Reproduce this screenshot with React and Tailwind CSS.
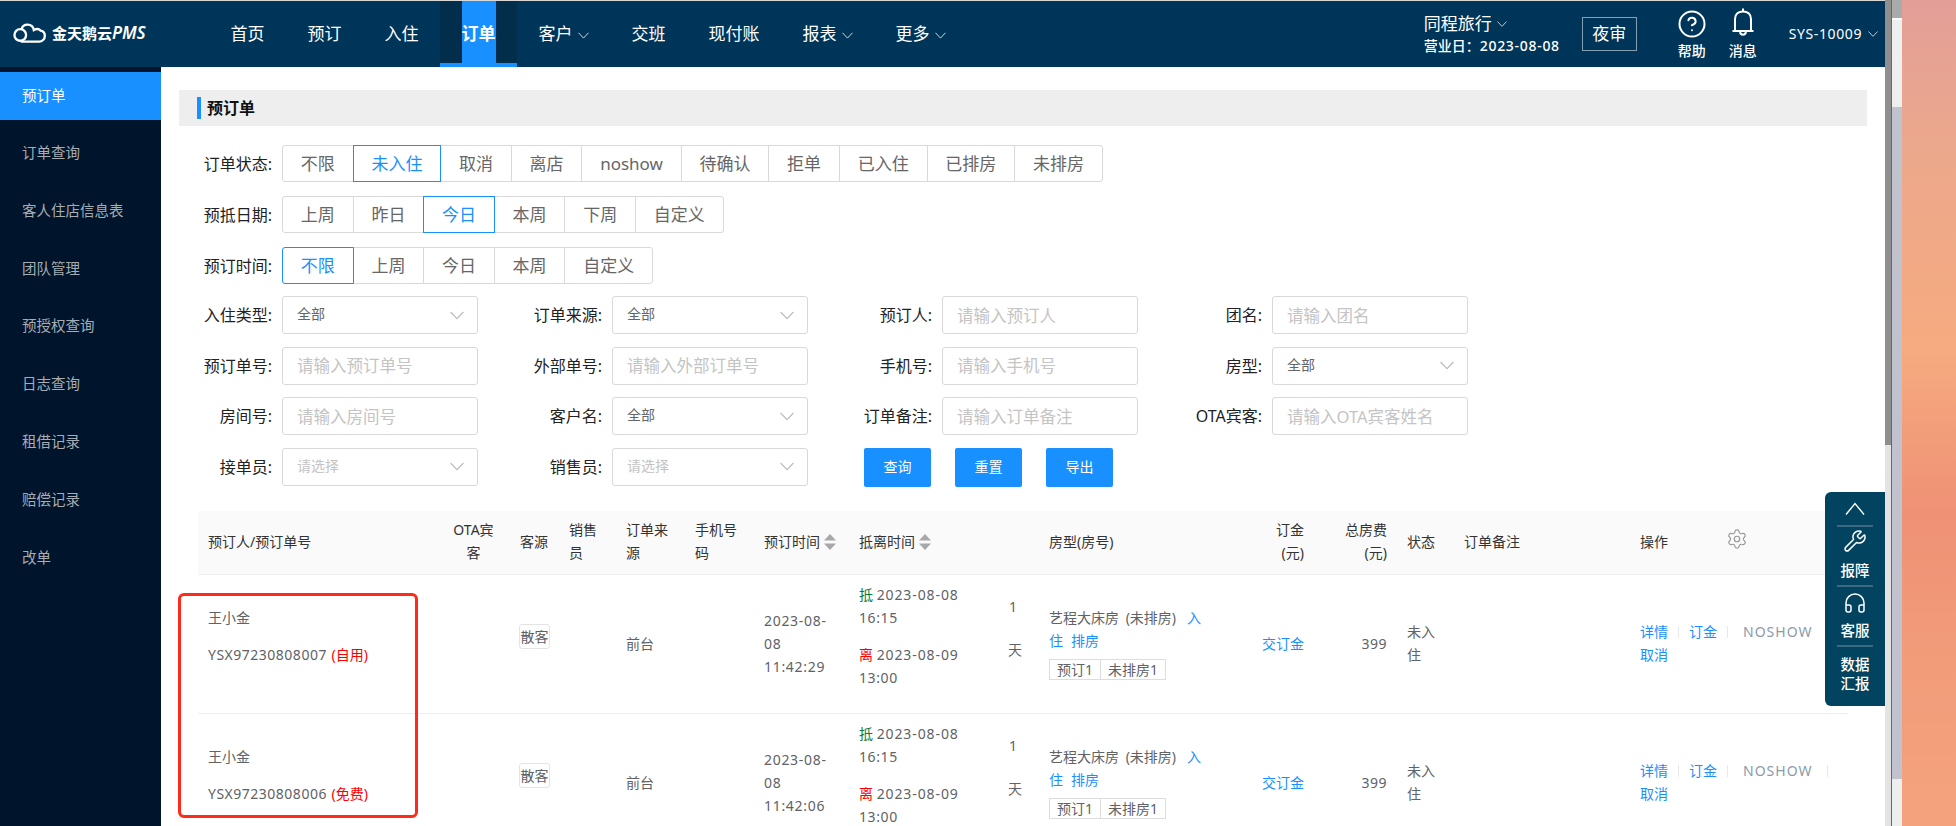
import React from 'react';
import { CircleHelp, Headphones, Settings, Wrench } from 'lucide-react';

const navItems = [
  { label: '首页' },
  { label: '预订' },
  { label: '入住' },
  { label: '订单', active: true },
  { label: '客户', arrow: true },
  { label: '交班' },
  { label: '现付账' },
  { label: '报表', arrow: true },
  { label: '更多', arrow: true },
];

const sideItems = ['订单查询', '客人住店信息表', '团队管理', '预授权查询', '日志查询', '租借记录', '赔偿记录', '改单'];

const statusOptions = ['不限', '未入住', '取消', '离店', 'noshow', '待确认', '拒单', '已入住', '已排房', '未排房'];
const arriveOptions = ['上周', '昨日', '今日', '本周', '下周', '自定义'];
const bookOptions = ['不限', '上周', '今日', '本周', '自定义'];

const orders = [
  { no: 'YSX97230808007', tag: '(自用)', time: '2023-08-08 11:42:29' },
  { no: 'YSX97230808006', tag: '(免费)', time: '2023-08-08 11:42:06' },
];

const Chevron = ({ className }) => (
  <svg viewBox="0 0 12 7" fill="none" stroke="currentColor" strokeWidth="1" className={className}>
    <path d="M0.5 0.5 L6 6.3 L11.5 0.5" />
  </svg>
);

const SortIcon = () => (
  <svg viewBox="0 0 12 16" className="inline-block w-[12px] h-[16px] ml-[4px] align-[-3px] fill-[#a8a8a8]">
    <path d="M6 0 L12 6.5 H0 Z" />
    <path d="M6 16 L0 9.5 H12 Z" />
  </svg>
);

const Segmented = ({ label, options, selected }) => (
  <div className="flex items-center h-[37px] gap-[10px]">
    <div className="w-[93px] text-right text-base text-[#222]">{label}</div>
    <div className="flex pl-px">
      {options.map((opt, i) => (
        <div
          key={opt}
          className={`relative -ml-px h-[37px] px-[17.8px] flex items-center border text-[17px] ${
            opt === selected ? 'z-10 border-[#1890ff] text-[#1890ff]' : 'border-[#d9d9d9] text-[#666]'
          } ${i === 0 ? 'rounded-l-[3px]' : ''} ${i === options.length - 1 ? 'rounded-r-[3px]' : ''}`}
        >
          {opt}
        </div>
      ))}
    </div>
  </div>
);

const FieldLabel = ({ children }) => (
  <div className="flex items-center justify-end text-base text-[#222]">{children}</div>
);

const SelectBox = ({ value, placeholder }) => (
  <div className="h-[38px] flex items-center justify-between pl-[14px] pr-[13px] border border-[#d9d9d9] rounded-[3px]">
    <span className={`text-sm -mt-[2px] ${placeholder ? 'text-[#c4c4c4]' : 'text-[#666]'}`}>{value}</span>
    <Chevron className="w-[14px] h-[9px] text-[#bbb]" />
  </div>
);

const TextBox = ({ placeholder }) => (
  <input
    type="text"
    placeholder={placeholder}
    className="w-full h-[38px] pl-[14px] pr-[4px] border border-[#d9d9d9] rounded-[3px] text-[16.5px] placeholder:text-[#c4c4c4] outline-none"
  />
);

const ActionSep = ({ className }) => <span className={`w-px h-[12px] bg-[#e8e8e8] ${className}`} />;

const OrderRow = ({ order }) => (
  <tr className="h-[139px] border-b border-[#eee] text-sm leading-[23px] text-[#606266] [&>td]:pb-[2px]">
    <td className="px-[10px] align-middle">
      <p className="mb-[14px]">王小金</p>
      <p className="mb-[14px]">
        <span className="tracking-[0.5px]">{order.no}</span> <span className="ml-[1px] text-[#f00]">{order.tag}</span>
      </p>
    </td>
    <td />
    <td className="px-[10px]">
      <p className="mb-[14px]">
        <span className="block w-[31px] -mx-px text-center border border-[#e4e4e4] rounded-[3px]">散客</span>
      </p>
    </td>
    <td />
    <td className="px-[10px]">前台</td>
    <td />
    <td className="px-[10px] tracking-[0.7px]">{order.time}</td>
    <td className="px-[10px]">
      <p className="mb-[14px]">
        <span className="text-[#0a7a3b]">抵</span> <span className="tracking-[0.9px]">2023-08-08</span>
        <br />
        <span className="tracking-[0.6px]">16:15</span>
      </p>
      <p className="mb-[14px]">
        <span className="text-[#f00]">离</span> <span className="tracking-[0.9px]">2023-08-09</span>
        <br />
        <span className="tracking-[0.6px]">13:00</span>
      </p>
    </td>
    <td className="pl-[9px]">
      <div className="mb-[30px]">
        <div className="mb-[20px] pl-px">1</div>
        <div>天</div>
      </div>
    </td>
    <td className="px-[10px]">
      <div className="whitespace-nowrap">
        艺程大床房 <span className="ml-[3px]">(未排房)</span>
        <a className="ml-[11px] text-[#1890ff]">入</a>
        <br />
        <a className="text-[#1890ff]">住</a>
        <a className="ml-[8px] text-[#1890ff]">排房</a>
      </div>
      <div className="flex mt-[7px] text-sm leading-[19px]">
        <span className="px-[7px] border border-[#ddd]">预订1</span>
        <span className="px-[7px] border border-[#ddd] -ml-px">未排房1</span>
      </div>
    </td>
    <td className="px-[10px] text-right text-[#1890ff]">交订金</td>
    <td className="px-[10px] text-right tracking-[0.5px]">399</td>
    <td className="px-[10px]">未入住</td>
    <td />
    <td className="px-[10px]">
      <div className="flex flex-wrap items-center text-[#1890ff]">
        <span>详情</span>
        <ActionSep className="mx-[10px]" />
        <span>订金</span>
        <ActionSep className="ml-[10px] mr-[15px]" />
        <span className="text-[#8c9bab] tracking-[1px]">NOSHOW</span>
        <ActionSep className="ml-[15px]" />
        <span>取消</span>
      </div>
    </td>
  </tr>
);

const App = () => {
  return (
    <div className="relative flex w-[1956px] h-[826px] overflow-hidden bg-white font-['Noto_Sans','Noto_Sans_CJK_SC',sans-serif]">
      <div className="relative w-[1885px] shrink-0 flex flex-col">
        <div className="h-px bg-[#d8d8d8]" />

        {/* Top bar */}
        <header className="flex h-[66px] bg-[#00355a] text-white shrink-0">
          <div className="w-[209px] flex items-center pl-[13px] gap-[6px]">
            <svg viewBox="0 0 34 20" fill="none" stroke="white" strokeWidth="2.4" className="w-[33px] h-[20px] -mt-[3px]">
              <circle cx="7.5" cy="12" r="6" />
              <path d="M9 6 C9.5 3 12 1.3 15 1.3 C18.5 1.3 21 3.8 21.5 7 C24 5.5 27 6 28.5 7.5 C31.5 8 32.8 10.5 32.8 13 C32.8 16.5 30 18.8 27 18.8 H8" />
            </svg>
            <span className="text-[15px] font-bold leading-none -mt-[3px]">
              金天鹅云<span className="italic font-semibold text-[17px]">PMS</span>
            </span>
          </div>
          <nav className="flex">
            {navItems.map((item) =>
              item.active ? (
                <div key={item.label} className="h-full px-[21.5px] bg-[#022e4c] border-b-[4px] border-[#1890ff]">
                  <div className="h-[62px] pt-[4px] flex items-center bg-[#1890ff] font-bold text-[17px]">{item.label}</div>
                </div>
              ) : (
                <div key={item.label} className="h-full px-[21.5px] flex items-center gap-[5px] text-[17px]">
                  {item.label}
                  {item.arrow && <Chevron className="w-[11px] h-[7px] text-[#dfe6ec] mt-[2px]" />}
                </div>
              )
            )}
          </nav>
          <div className="ml-auto flex items-center pr-[7px]">
            <div className="w-[158px] flex flex-col -mt-[1px]">
              <div className="flex items-center gap-[5px] text-[17px] leading-[24px]">
                同程旅行
                <Chevron className="w-[10px] h-[6px] text-[#dfe6ec]" />
              </div>
              <div className="text-sm font-medium leading-[20px]">
                营业日：<span className="tracking-[0.7px]">2023-08-08</span>
              </div>
            </div>
            <div className="w-[55px] h-[34px] flex items-center justify-center border border-[#84a0b3] text-[17px]">夜审</div>
            <div className="ml-[37px] w-[36px] self-start pt-[8px] flex flex-col items-center">
              <CircleHelp size={30} strokeWidth={1.6} />
              <span className="mt-[3px] text-sm font-medium leading-[18px]">帮助</span>
            </div>
            <div className="ml-[15px] w-[36px] self-start pt-[7px] flex flex-col items-center">
              <svg viewBox="0 0 22 28" fill="none" stroke="white" strokeWidth="2" className="w-[22px] h-[28px]">
                <path d="M11 0.5 V3.5" />
                <path d="M3 22.5 V11 C3 6 6.5 3.5 11 3.5 C15.5 3.5 19 6 19 11 V22.5" />
                <path d="M0.5 23 H21.5" />
                <path d="M8 24 C8.5 27.5 13.5 27.5 14 24" />
              </svg>
              <span className="mt-[6px] text-sm font-medium leading-[18px]">消息</span>
            </div>
            <div className="ml-[28px] flex items-center gap-[6px] text-sm tracking-[0.6px]">
              SYS-10009
              <Chevron className="w-[10px] h-[6px] text-[#dfe6ec]" />
            </div>
          </div>
        </header>

        <div className="flex flex-1 min-h-0">
          {/* Side menu */}
          <aside className="w-[161px] shrink-0 bg-[#00142b] pt-[5px] text-[14.5px] text-[#a6adb4]">
            <div className="h-[48px] mb-[4px] flex items-center pl-[22px] bg-[#1890ff] text-white">预订单</div>
            {sideItems.map((item) => (
              <div key={item} className="h-[57.8px] flex items-center pl-[22px]">
                {item}
              </div>
            ))}
          </aside>

          {/* Main content */}
          <main className="flex-1 min-w-0 px-[18px] pt-[23px] overflow-hidden">
            <div className="h-[36px] flex items-center pl-[18px] bg-[#eee]">
              <span className="w-[4px] h-[22px] bg-[#1890ff] mr-[6px]" />
              <h2 className="text-base font-bold text-[#111]">预订单</h2>
            </div>

            <div className="mt-[19px] flex flex-col gap-[14px]">
              <Segmented label="订单状态:" options={statusOptions} selected="未入住" />
              <Segmented label="预抵日期:" options={arriveOptions} selected="今日" />
              <Segmented label="预订时间:" options={bookOptions} selected="不限" />
            </div>

            <div className="mt-[12px] grid grid-cols-[93px_196px_114px_196px_114px_196px_114px_196px] gap-x-[10px] gap-y-[12.5px]">
              <FieldLabel>入住类型:</FieldLabel>
              <SelectBox value="全部" />
              <FieldLabel>订单来源:</FieldLabel>
              <SelectBox value="全部" />
              <FieldLabel>预订人:</FieldLabel>
              <TextBox placeholder="请输入预订人" />
              <FieldLabel>团名:</FieldLabel>
              <TextBox placeholder="请输入团名" />

              <FieldLabel>预订单号:</FieldLabel>
              <TextBox placeholder="请输入预订单号" />
              <FieldLabel>外部单号:</FieldLabel>
              <TextBox placeholder="请输入外部订单号" />
              <FieldLabel>手机号:</FieldLabel>
              <TextBox placeholder="请输入手机号" />
              <FieldLabel>房型:</FieldLabel>
              <SelectBox value="全部" />

              <FieldLabel>房间号:</FieldLabel>
              <TextBox placeholder="请输入房间号" />
              <FieldLabel>客户名:</FieldLabel>
              <SelectBox value="全部" />
              <FieldLabel>订单备注:</FieldLabel>
              <TextBox placeholder="请输入订单备注" />
              <FieldLabel>OTA宾客:</FieldLabel>
              <TextBox placeholder="请输入OTA宾客姓名" />

              <FieldLabel>接单员:</FieldLabel>
              <SelectBox value="请选择" placeholder />
              <FieldLabel>销售员:</FieldLabel>
              <SelectBox value="请选择" placeholder />
              <div className="col-span-4 flex gap-[24px] pl-[46px]">
                {['查询', '重置', '导出'].map((b) => (
                  <button key={b} className="w-[67px] h-[39px] bg-[#1890ff] text-white text-sm rounded-[2px]">
                    {b}
                  </button>
                ))}
              </div>
            </div>

            {/* Order table */}
            <div className="relative mt-[24px] ml-[19px] w-[1650px]">
              <table className="table-fixed w-[1650px] border-collapse">
                <colgroup>
                  <col className="w-[239px]" />
                  <col className="w-[73px]" />
                  <col className="w-[49px]" />
                  <col className="w-[57px]" />
                  <col className="w-[69px]" />
                  <col className="w-[69px]" />
                  <col className="w-[95px]" />
                  <col className="w-[150px]" />
                  <col className="w-[40px]" />
                  <col className="w-[181px]" />
                  <col className="w-[94px]" />
                  <col className="w-[83px]" />
                  <col className="w-[57px]" />
                  <col className="w-[176px]" />
                  <col className="w-[218px]" />
                </colgroup>
                <thead>
                  <tr className="h-[64px] bg-[#fafafa] border-b border-[#eee] text-sm leading-[23px] text-[#333] text-left font-normal [&>th]:pb-[2px]">
                    <th className="px-[10px] font-normal">预订人/预订单号</th>
                    <th className="px-[10px] font-normal text-center">OTA宾客</th>
                    <th className="px-[10px] font-normal">客源</th>
                    <th className="px-[10px] font-normal">销售员</th>
                    <th className="px-[10px] font-normal">订单来源</th>
                    <th className="px-[10px] font-normal">手机号码</th>
                    <th className="px-[10px] font-normal whitespace-nowrap">
                      预订时间
                      <SortIcon />
                    </th>
                    <th className="px-[10px] font-normal whitespace-nowrap">
                      抵离时间
                      <SortIcon />
                    </th>
                    <th />
                    <th className="px-[10px] font-normal">房型(房号)</th>
                    <th className="px-[10px] font-normal text-right">
                      订金
                      <br />
                      (元)
                    </th>
                    <th className="px-[10px] font-normal text-right">
                      总房费
                      <br />
                      (元)
                    </th>
                    <th className="px-[10px] font-normal">状态</th>
                    <th className="px-[10px] font-normal">订单备注</th>
                    <th className="px-[10px] font-normal">
                      <div className="flex items-center">
                        操作
                        <Settings size={22} strokeWidth={1.3} className="ml-[58px] -mt-[4px] text-[#999]" />
                      </div>
                    </th>
                  </tr>
                </thead>
                <tbody>
                  {orders.map((order) => (
                    <OrderRow key={order.no} order={order} />
                  ))}
                </tbody>
              </table>
              {/* red annotation box drawn over the screenshot */}
              <div className="absolute left-[-20px] top-[82px] w-[240px] h-[225px] border-[3px] border-[#ff2a1a] rounded-[6px] pointer-events-none" />
            </div>
          </main>
        </div>

        {/* Floating tool strip */}
        <div className="absolute right-0 top-[492px] w-[60px] h-[214px] bg-[#02435f] rounded-l-[6px] flex flex-col items-center text-[14.5px] font-medium text-white">
          <div className="h-[33px] flex items-center justify-center">
            <svg viewBox="0 0 20 13" fill="none" stroke="white" strokeWidth="1.4" className="w-[20px] h-[13px]">
              <path d="M1 12.5 L10 1.5 L19 12.5" />
            </svg>
          </div>
          <div className="w-[36px] h-[2px] bg-[#3d6a82]" />
          <div className="h-[58px] flex flex-col items-center pt-[2px]">
            <Wrench size={24} strokeWidth={1.5} />
            <span className="mt-[7px] leading-[20px]">报障</span>
          </div>
          <div className="w-[36px] h-[2px] bg-[#3d6a82]" />
          <div className="h-[58px] flex flex-col items-center pt-[4px]">
            <Headphones size={24} strokeWidth={1.5} />
            <span className="mt-[5px] leading-[20px]">客服</span>
          </div>
          <div className="w-[36px] h-[2px] bg-[#3d6a82]" />
          <div className="pt-[8px] w-[30px] text-center leading-[19px]">数据汇报</div>
        </div>
      </div>

      {/* Scrollbar */}
      <div className="w-[6px] shrink-0 flex flex-col bg-[#e3e3e3]">
        <div className="h-[445px] bg-[#8f8f8f]" />
      </div>
      <div className="w-px shrink-0 bg-[#66666e]" />

      {/* Window behind and desktop wallpaper */}
      <div className="w-[10px] shrink-0 flex flex-col bg-[#c0c3cd]">
        <div className="h-[18px] bg-[#aaa]" />
        <div className="h-[2px] bg-white" />
        <div className="h-[87px] bg-[#efefef]" />
        <div className="h-[672px] bg-[#c0c3cd]" />
        <div className="flex-1 bg-[#eee]" />
      </div>
      <div className="flex-1 bg-[linear-gradient(180deg,#e39e98_0%,#eca88c_18%,#f6ab80_42%,#ef9175_62%,#f29c7a_80%,#f4a27e_100%)]" />
    </div>
  );
};

export default App;
